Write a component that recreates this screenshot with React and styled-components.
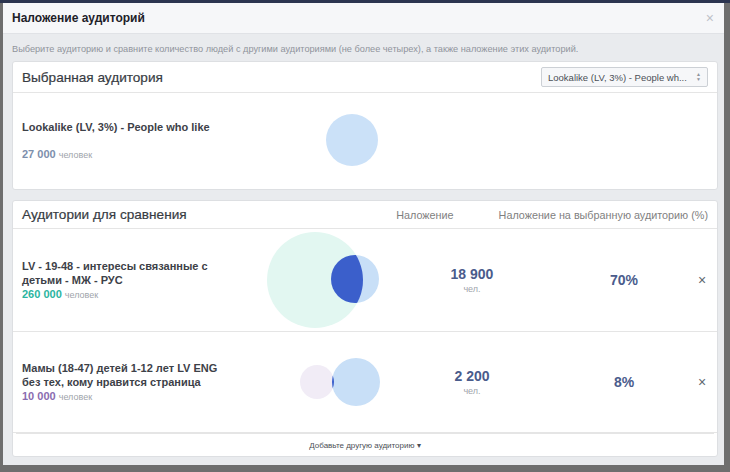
import React from 'react';
import styled, { createGlobalStyle } from 'styled-components';

const GlobalStyle = createGlobalStyle`
    html, body {
        margin: 0;
        padding: 0;
        background: #6e6e6e;
        font-family: "Liberation Sans", Arial, sans-serif;
    }
`

const Page = styled.div`
    width: 730px;
    height: 472px;
    overflow: hidden;
    background: #6e6e6e;
    border-top: 3px solid #2c3550;
    box-sizing: border-box;
`

const Modal = styled.div`
    margin-left: 3px;
    width: 721px;
    background: #e9ebee;
    display: flex;
    flex-direction: column;
`

const Header = styled.div`
    height: 30px;
    background: #f6f7f9;
    border-bottom: 1px solid #e0e2e6;
    display: flex;
    align-items: center;
    justify-content: space-between;
    padding: 0 10px 0 9px;
`

const Title = styled.span`
    font-size: 12px;
    font-weight: bold;
    color: #1d2129;
`

const CloseHeader = styled.span`
    font-size: 14px;
    color: #bec2c9;
`

const Body = styled.div`
    padding: 8px 6px 8px 9px;
    display: flex;
    flex-direction: column;
    gap: 10px;
`

const Hint = styled.div`
    font-size: 9.2px;
    color: #90949c;
    line-height: 14px;
    margin-bottom: -5px;
`

const Card = styled.div`
    background: #fff;
    border: 1px solid #dddfe2;
    border-radius: 3px;
`

const CardHeader = styled.div`
    height: ${p => p.$h}px;
    border-bottom: 1px solid #e5e5e5;
    display: flex;
    align-items: center;
    padding: 0 9px;
`

const CardTitle = styled.span`
    flex: 1;
    font-size: 13.6px;
    color: #383c43;
    -webkit-text-stroke: 0.2px #383c43;
`

const Select = styled.div`
    width: 153px;
    height: 18px;
    border: 1px solid #ccd0d5;
    background: #f6f7f9;
    border-radius: 2px;
    display: flex;
    align-items: center;
    justify-content: space-between;
    padding: 0 6px 0 6px;
    box-sizing: content-box;
    font-size: 9.5px;
    white-space: nowrap;
    color: #4b4f56;
`

const Arrows = styled.span`
    font-size: 5px;
    line-height: 5px;
    color: #90949c;
`

const ColLabel = styled.span`
    font-size: 10.8px;
    color: #7f7f7f;
    margin-right: ${p => p.$mr || 0}px;
`

const Row = styled.div`
    height: ${p => p.$h}px;
    display: grid;
    grid-template-columns: 240px 126px 168px 136px 20px;
    align-items: center;
    padding-left: 9px;
    border-bottom: ${p => p.$last ? 'none' : '1px solid #e5e5e5'};
`

const Name = styled.div`
    display: flex;
    flex-direction: column;
    gap: ${p => p.$gap || 0}px;
`

const NameText = styled.div`
    font-size: 11px;
    font-weight: bold;
    line-height: 14px;
    color: #3d4148;
`

const Count = styled.div`
    font-size: 11px;
    line-height: 14px;
    font-weight: bold;
    color: ${p => p.$color};
`

const People = styled.span`
    font-size: 9px;
    font-weight: normal;
    color: #a0a4ab;
`

const Stat = styled.div`
    display: flex;
    flex-direction: column;
    align-items: center;
    gap: 2px;
`

const Big = styled.div`
    font-size: 14px;
    font-weight: bold;
    color: #4a5c8c;
`

const Small = styled.div`
    font-size: 9px;
    color: #a0a4ab;
`

const Remove = styled.div`
    font-size: 14px;
    color: #606770;
    text-align: center;
`

const Footer = styled.div`
    height: 22px;
    border-top: 1px solid #e5e5e5;
    margin: 0 3px;
    display: flex;
    align-items: center;
    justify-content: center;
    font-size: 8px;
    color: #4b4f56;
`

const Venn = ({ h, a, b, id }) => (
    <svg width="126" height={h}>
        <defs>
            <clipPath id={id}>
                <circle cx={a.x} cy={a.y} r={a.r} />
            </clipPath>
        </defs>
        <circle cx={a.x} cy={a.y} r={a.r} fill={a.c} />
        <circle cx={b.x} cy={b.y} r={b.r} fill="#c8dff7" />
        <circle cx={b.x} cy={b.y} r={b.r} fill="#3b5fcb" clipPath={`url(#${id})`} />
    </svg>
)

const App = () => {
    return (
        <>
            <GlobalStyle />
            <Page>
                <Modal>
                    <Header>
                        <Title>Наложение аудиторий</Title>
                        <CloseHeader>×</CloseHeader>
                    </Header>
                    <Body>
                        <Hint>Выберите аудиторию и сравните количество людей с другими аудиториями (не более четырех), а также наложение этих аудиторий.</Hint>
                        <Card>
                            <CardHeader $h={30}>
                                <CardTitle>Выбранная аудитория</CardTitle>
                                <Select>
                                    <span>Lookalike (LV, 3%) - People wh...</span>
                                    <Arrows>▲<br />▼</Arrows>
                                </Select>
                            </CardHeader>
                            <Row $h={96} $last>
                                <Name $gap={13}>
                                    <NameText>Lookalike (LV, 3%) - People who like</NameText>
                                    <Count $color="#7d8fac">27 000 <People>человек</People></Count>
                                </Name>
                                <svg width="126" height="96">
                                    <circle cx="90" cy="47" r="26" fill="#cbe1f8" />
                                </svg>
                            </Row>
                        </Card>
                        <Card>
                            <CardHeader $h={27}>
                                <CardTitle>Аудитории для сравнения</CardTitle>
                                <ColLabel $mr={45}>Наложение</ColLabel>
                                <ColLabel>Наложение на выбранную аудиторию (%)</ColLabel>
                            </CardHeader>
                            <Row $h={102}>
                                <Name>
                                    <NameText>LV - 19-48 - интересы связанные с<br />детьми - МЖ - РУС</NameText>
                                    <Count $color="#2bb59f">260 000 <People>человек</People></Count>
                                </Name>
                                <Venn h={102} id="v1"
                                    a={{ x: 53, y: 51, r: 48, c: '#e2f7f1' }}
                                    b={{ x: 93, y: 50, r: 24 }} />
                                <Stat>
                                    <Big>18 900</Big>
                                    <Small>чел.</Small>
                                </Stat>
                                <Stat><Big>70%</Big></Stat>
                                <Remove>×</Remove>
                            </Row>
                            <Row $h={100}>
                                <Name>
                                    <NameText>Мамы (18-47) детей 1-12 лет LV ENG<br />без тех, кому нравится страница</NameText>
                                    <Count $color="#8a6cb0">10 000 <People>человек</People></Count>
                                </Name>
                                <Venn h={100} id="v2"
                                    a={{ x: 55, y: 50, r: 17, c: '#f1ecf6' }}
                                    b={{ x: 94, y: 50, r: 24 }} />
                                <Stat>
                                    <Big>2 200</Big>
                                    <Small>чел.</Small>
                                </Stat>
                                <Stat><Big>8%</Big></Stat>
                                <Remove>×</Remove>
                            </Row>
                            <Footer>Добавьте другую аудиторию ▾</Footer>
                        </Card>
                    </Body>
                </Modal>
            </Page>
        </>
    );
};

export default App;
